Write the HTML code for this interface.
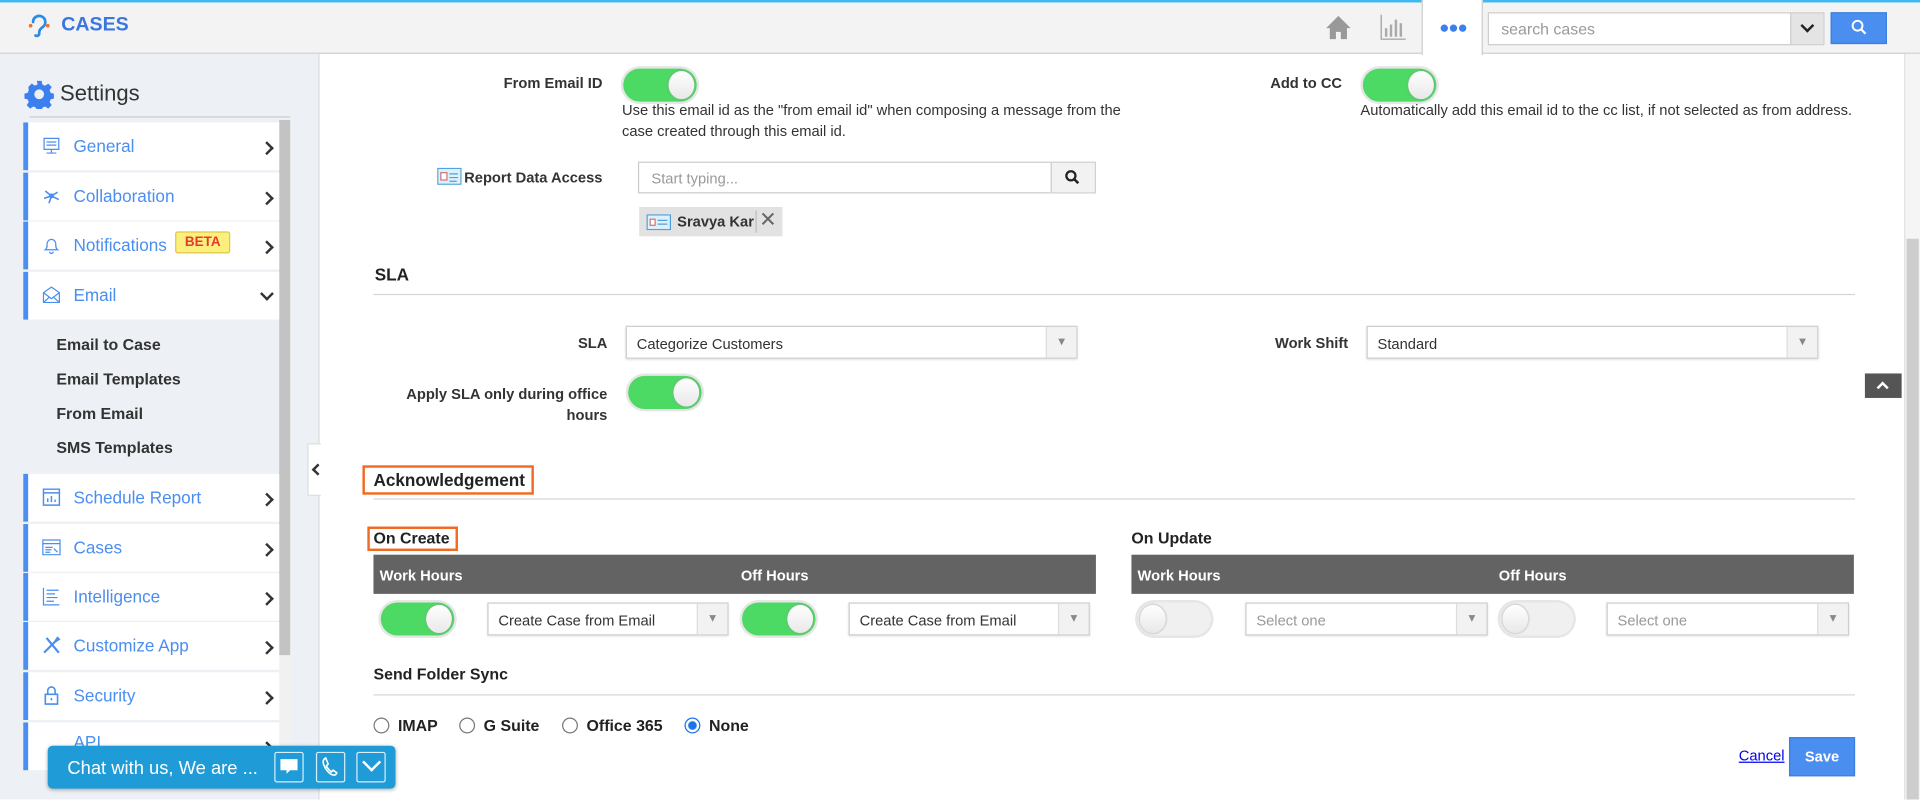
<!DOCTYPE html>
<html><head><meta charset="utf-8">
<style>
*{box-sizing:border-box;margin:0;padding:0}
html,body{width:1920px;height:799px;overflow:hidden;background:#fff;font-family:"Liberation Sans",Arial,sans-serif}
#s{position:absolute;left:0;top:0;width:1568px;height:653px;transform:scale(1.22449);transform-origin:0 0;overflow:hidden}
.a{position:absolute}
.hdr{left:0;top:0;width:1568px;height:44px;background:#f3f3f3;border-top:2px solid #3cb9f0;border-bottom:1px solid #cfcfcf}
.side{left:0;top:44px;width:261px;height:609px;background:#edf0f5;border-right:1px solid #dcdcdc}
.mi{position:absolute;left:19px;width:209px;height:39px;background:#fff;border-left:4px solid #4a8ef0;color:#4a8ef0;font-size:14px}
.mi .t{position:absolute;left:37px;top:11px}
.mi .i{position:absolute;left:11px;top:11px;width:16px;height:16px}
.mi .c{position:absolute;right:6px;top:17px;width:8px;height:8px;border-right:2.5px solid #333;border-top:2.5px solid #333;transform:rotate(45deg)}
.sub{position:absolute;left:46px;font-size:13px;font-weight:bold;color:#333}
.lbl{position:absolute;font-size:12px;font-weight:bold;color:#333;text-align:right;white-space:nowrap}
.tg{position:absolute;width:60px;height:27px;border-radius:14px;background:#4cd964;box-shadow:0 0 0 2px #e6e6e6}
.tg::after{content:"";position:absolute;right:2px;top:2px;width:21px;height:23px;border-radius:50%;background:linear-gradient(#fff,#e8e8e8);box-shadow:0 0 2px #999}
.tg.off{background:#f0f0f0}
.tg.off::after{left:2px;right:auto}
.desc{position:absolute;font-size:12px;color:#333;line-height:17px}
.sel{position:absolute;height:27px;border:1px solid #ccc;background:#fff;font-size:12px;color:#333;padding:7px 8px;box-shadow:0 1px 2px #ddd}
.sel::after{content:"▾";position:absolute;right:0;top:0;width:24px;height:25px;border-left:1px solid #ddd;background:#f2f2f2;color:#888;font-size:11px;text-align:center;line-height:25px}
.sel.ph{color:#999}
.h{position:absolute;font-size:14px;font-weight:bold;color:#222}
.line{position:absolute;height:1px;background:#d6d6d6}
.th{position:absolute;height:32px;background:#636363;color:#fff;font-size:12px;font-weight:bold}
.th span{position:absolute;top:10px}
.rad{position:absolute;top:586px;width:13px;height:13px;border:1px solid #777;border-radius:50%;background:#fff}
.rt{position:absolute;top:585px;font-size:13px;font-weight:bold;color:#222}
</style></head><body><div id="s">
<div class="a hdr">
 <svg class="a" style="left:22px;top:8px" width="20" height="24" viewBox="0 0 20 24"><path d="M5 8a5 5 0 1 1 8 4c-2 1.5-3 2.5-3 5v1a2 2 0 0 1-3 1" fill="none" stroke="#2a8be6" stroke-width="2.2" stroke-linecap="round"/><circle cx="3" cy="11" r="1.5" fill="#f0712a"/><circle cx="17" cy="11" r="1.5" fill="#f0712a"/></svg>
 <div class="a" style="left:50px;top:10px;font-size:16px;font-weight:bold;color:#3b76e0">CASES</div>
 <svg class="a" style="left:1082px;top:9px" width="22" height="22" viewBox="0 0 22 22"><path d="M11 2 1 12h3v9h5v-6h4v6h5v-9h3z" fill="#999"/></svg>
 <svg class="a" style="left:1127px;top:9px" width="22" height="22" viewBox="0 0 22 22"><path d="M1 1v20h20" fill="none" stroke="#aaa" stroke-width="1.2"/><path d="M5 12v7M9 9v10M13 5v14M17 8v11" stroke="#aaa" stroke-width="2"/></svg>
 <div class="a" style="left:1161px;top:-2px;width:50px;height:45px;background:#fff;border-left:1px solid #ccc;border-right:1px solid #ccc"></div>
 <svg class="a" style="left:1176px;top:17px" width="22" height="8" viewBox="0 0 22 8"><circle cx="3.5" cy="4" r="3" fill="#3b80ee"/><circle cx="11" cy="4" r="3" fill="#3b80ee"/><circle cx="18.5" cy="4" r="3" fill="#3b80ee"/></svg>
 <div class="a" style="left:1215px;top:8px;width:275px;height:27px;background:#fff;border:1px solid #ccc;font-size:13px;color:#999;padding:5px 10px">search cases</div>
 <div class="a" style="left:1462px;top:9px;width:27px;height:25px;background:#e4e4e4;border-left:1px solid #ccc"></div>
 <div class="a" style="left:1472px;top:15px;width:8px;height:8px;border-right:2.5px solid #222;border-bottom:2.5px solid #222;transform:rotate(45deg)"></div>
 <div class="a" style="left:1495px;top:8px;width:46px;height:26px;background:#4a8ef0;border:1px solid #3a7ee0"></div>
 <svg class="a" style="left:1511px;top:13px" width="14" height="14" viewBox="0 0 14 14"><circle cx="6" cy="6" r="4" fill="none" stroke="#fff" stroke-width="1.6"/><path d="M9 9l3.5 3.5" stroke="#fff" stroke-width="1.8"/></svg>
</div>

<div class="a side"></div>
<svg class="a" style="left:20px;top:65px" width="24" height="24" viewBox="0 0 24 24"><path fill="#3b80ee" d="M10 1h4l.6 3 2.2 1 2.6-1.7 2.8 2.8-1.7 2.6 1 2.2 3 .6v4l-3 .6-1 2.2 1.7 2.6-2.8 2.8-2.6-1.7-2.2 1-.6 3h-4l-.6-3-2.2-1-2.6 1.7-2.8-2.8 1.7-2.6-1-2.2-3-.6v-4l3-.6 1-2.2L3.1 6l2.8-2.8 2.6 1.7 2.2-1z"/><circle cx="12" cy="12" r="4" fill="#edf0f5"/></svg>
<div class="a" style="left:49px;top:66px;font-size:18px;color:#333">Settings</div>
<div class="a" style="left:24px;top:95px;width:213px;height:1px;background:#ccc"></div>
<div class="a" style="left:228px;top:98px;width:10px;height:545px;background:#f1f1f1"></div>
<div class="a" style="left:228px;top:98px;width:9px;height:437px;background:#c3c3c3"></div>

<div class="mi" style="top:100px"><svg class="i" viewBox="0 0 16 16"><path d="M2 2h12v9H2zM8 11v3M4 14h8M4 5h8M4 7.5h8" fill="none" stroke="#4a8ef0"/></svg><span class="t">General</span><span class="c"></span></div>
<div class="mi" style="top:141px"><svg class="i" viewBox="0 0 16 16"><path d="M8 8 3 4M8 8l5-3M8 8l-2 6M8 8l6 3M8 8 2 10" stroke="#4a8ef0" stroke-width="1.3"/><circle cx="8" cy="8" r="2" fill="#4a8ef0"/></svg><span class="t">Collaboration</span><span class="c"></span></div>
<div class="mi" style="top:181px"><svg class="i" viewBox="0 0 16 16"><path d="M3 12c1.5-1 1.5-3 1.5-5a3.5 3.5 0 0 1 7 0c0 2 0 4 1.5 5zM6.5 13.5a1.5 1.5 0 0 0 3 0" fill="none" stroke="#4a8ef0"/></svg><span class="t">Notifications</span><span class="a" style="left:120px;top:8px;background:#fbef7d;border:1px solid #e0c940;color:#e8382f;font-size:11px;font-weight:bold;padding:2px 7px;border-radius:2px">BETA</span><span class="c"></span></div>
<div class="mi" style="top:222px"><svg class="i" viewBox="0 0 16 16"><path d="M1.5 6 8 1.5 14.5 6v8h-13zM1.5 6 8 11l6.5-5M1.5 14l5-4.5M14.5 14l-5-4.5" fill="none" stroke="#4a8ef0"/></svg><span class="t">Email</span><span class="a" style="right:6px;top:14px;width:8px;height:8px;border-right:2.5px solid #333;border-bottom:2.5px solid #333;transform:rotate(45deg)"></span></div>
<div class="sub" style="top:274px">Email to Case</div>
<div class="sub" style="top:302px">Email Templates</div>
<div class="sub" style="top:330px">From Email</div>
<div class="sub" style="top:358px">SMS Templates</div>
<div class="mi" style="top:387px"><svg class="i" viewBox="0 0 16 16"><path d="M1.5 1.5h13v13h-13zM1.5 4.5h13M5 12V9M8 12V7M11 12v-2" fill="none" stroke="#4a8ef0" stroke-width="1.2"/></svg><span class="t">Schedule Report</span><span class="c"></span></div>
<div class="mi" style="top:428px"><svg class="i" viewBox="0 0 16 16"><path d="M1 2h14v12H1zM1 5h14M3 8h6M3 10h5M3 12h4M10 9l3 3" fill="none" stroke="#4a8ef0"/></svg><span class="t">Cases</span><span class="c"></span></div>
<div class="mi" style="top:468px"><svg class="i" viewBox="0 0 16 16"><path d="M1.5 1v14h13M4 3h10M4 6h7M4 9h9M4 12h6" fill="none" stroke="#4a8ef0"/></svg><span class="t">Intelligence</span><span class="c"></span></div>
<div class="mi" style="top:508px"><svg class="i" viewBox="0 0 16 16"><path d="M2 14 11 5M4 2l10 12M11 5l2-3 1 1-3 2" fill="none" stroke="#4a8ef0" stroke-width="1.8"/></svg><span class="t">Customize App</span><span class="c"></span></div>
<div class="mi" style="top:549px"><svg class="i" viewBox="0 0 16 16"><path d="M3 7h10v8H3zM5 7V4a3 3 0 0 1 6 0v3M8 10v2" fill="none" stroke="#4a8ef0" stroke-width="1.3"/></svg><span class="t">Security</span><span class="c"></span></div>
<div class="mi" style="top:590px"><span class="t" style="top:8px">API</span><span class="c"></span></div>

<div class="a" style="left:39px;top:609px;width:284px;height:35px;background:#1f9bd8;border-radius:4px;box-shadow:0 1px 3px rgba(0,0,0,.3)"></div>
<div class="a" style="left:55px;top:619px;color:#fff;font-size:15px">Chat with us, We are ...</div>
<div class="a" style="left:224px;top:614px;width:24px;height:25px;border:1px solid #d8eefa;border-radius:2px"></div>
<svg class="a" style="left:228px;top:618px" width="16" height="16" viewBox="0 0 16 16"><path d="M1 2h14v9H9l-3 3v-3H1z" fill="#fff"/></svg>
<div class="a" style="left:258px;top:614px;width:24px;height:25px;border:1px solid #d8eefa;border-radius:2px"></div>
<svg class="a" style="left:262px;top:618px" width="16" height="16" viewBox="0 0 16 16"><path d="M4 1c-2 1-3 3-1 7s5 7 8 7c1 0 2-1 2-2l-3-2-1.5 1.5C7 11 5 9 4.5 7.5L6 6 4 1z" fill="none" stroke="#fff" stroke-width="1.3"/></svg>
<div class="a" style="left:291px;top:614px;width:24px;height:25px;border:1px solid #d8eefa;border-radius:2px"></div>
<div class="a" style="left:298px;top:617px;width:11px;height:11px;border-right:2px solid #fff;border-bottom:2px solid #fff;transform:rotate(45deg)"></div>

<div class="a" style="left:251px;top:362px;width:11px;height:43px;background:#fff;border:1px solid #ddd;border-right:none"></div>
<div class="a" style="left:256px;top:380px;width:7px;height:7px;border-left:2.5px solid #333;border-bottom:2.5px solid #333;transform:rotate(45deg)"></div>

<div class="a" style="left:1555px;top:44px;width:13px;height:609px;background:#f5f5f5;border-left:1px solid #e2e2e2"></div>
<div class="a" style="left:1557px;top:195px;width:10px;height:458px;background:#cdcdcd"></div>
<div class="a" style="left:1523px;top:305px;width:30px;height:20px;background:#555"></div>
<div class="a" style="left:1534px;top:313px;width:7px;height:7px;border-left:2px solid #fff;border-top:2px solid #fff;transform:rotate(45deg)"></div>

<div class="lbl" style="left:380px;width:112px;top:61px">From Email ID</div>
<div class="tg" style="left:509px;top:56px"></div>
<div class="desc" style="left:508px;top:82px">Use this email id as the "from email id" when composing a message from the<br>case created through this email id.</div>
<div class="lbl" style="left:980px;width:116px;top:61px">Add to CC</div>
<div class="tg" style="left:1113px;top:56px"></div>
<div class="desc" style="left:1111px;top:82px">Automatically add this email id to the cc list, if not selected as from address.</div>

<svg class="a" style="left:357px;top:137px" width="20" height="14" viewBox="0 0 20 14"><rect x=".5" y=".5" width="19" height="13" fill="#dff0fb" stroke="#4aa3e0"/><rect x="3" y="4" width="5" height="6" fill="#fff" stroke="#c77"/><path d="M10 5h7M10 8h7M10 11h6" stroke="#4aa3e0"/></svg>
<div class="lbl" style="left:362px;width:130px;top:138px">Report Data Access</div>
<div class="a" style="left:521px;top:132px;width:374px;height:26px;border:1px solid #ccc;background:#fff;font-size:12px;color:#999;padding:6px 10px">Start typing...</div>
<div class="a" style="left:858px;top:133px;width:36px;height:24px;background:#f2f2f2;border-left:1px solid #ccc"></div>
<svg class="a" style="left:869px;top:138px" width="13" height="13" viewBox="0 0 14 14"><circle cx="6" cy="6" r="4" fill="none" stroke="#222" stroke-width="2"/><path d="M9 9l3.5 3.5" stroke="#222" stroke-width="2.2"/></svg>
<div class="a" style="left:522px;top:169px;width:117px;height:24px;background:#e2e2e2"></div>
<svg class="a" style="left:528px;top:175px" width="20" height="13" viewBox="0 0 20 13"><rect x=".5" y=".5" width="19" height="12" fill="#dff0fb" stroke="#4aa3e0"/><rect x="3" y="4" width="4" height="5" fill="#fff" stroke="#c77"/><path d="M9 5h8M9 8h8" stroke="#4aa3e0"/></svg>
<div class="a" style="left:553px;top:174px;font-size:12px;font-weight:bold;color:#333">Sravya Kar</div>
<div class="a" style="left:617px;top:172px;width:1px;height:18px;background:#bbb"></div>
<div class="a" style="left:620px;top:170px;font-size:17px;color:#666">✕</div>

<div class="h" style="left:306px;top:216px">SLA</div>
<div class="line" style="left:305px;top:240px;width:1210px"></div>
<div class="lbl" style="left:400px;width:96px;top:273px">SLA</div>
<div class="sel" style="left:511px;top:266px;width:369px">Categorize Customers</div>
<div class="lbl" style="left:1000px;width:101px;top:273px">Work Shift</div>
<div class="sel" style="left:1116px;top:266px;width:369px">Standard</div>
<div class="lbl" style="left:300px;width:196px;top:314px;line-height:17px;white-space:normal">Apply SLA only during office<br>hours</div>
<div class="tg" style="left:513px;top:307px"></div>

<div class="a" style="left:296px;top:380px;width:140px;height:24px;border:2px solid #f26a21"></div>
<div class="h" style="left:305px;top:384px">Acknowledgement</div>
<div class="line" style="left:305px;top:407px;width:1210px"></div>
<div class="a" style="left:300px;top:430px;width:74px;height:20px;border:2px solid #f26a21"></div>
<div class="h" style="left:305px;top:432px;font-size:13px">On Create</div>
<div class="h" style="left:924px;top:432px;font-size:13px">On Update</div>
<div class="th" style="left:305px;top:453px;width:590px"><span style="left:5px">Work Hours</span><span style="left:300px">Off Hours</span></div>
<div class="th" style="left:924px;top:453px;width:590px"><span style="left:5px">Work Hours</span><span style="left:300px">Off Hours</span></div>
<div class="tg" style="left:311px;top:492px"></div>
<div class="sel" style="left:398px;top:492px;width:197px">Create Case from Email</div>
<div class="tg" style="left:606px;top:492px"></div>
<div class="sel" style="left:693px;top:492px;width:197px">Create Case from Email</div>
<div class="tg off" style="left:929px;top:492px"></div>
<div class="sel ph" style="left:1017px;top:492px;width:198px">Select one</div>
<div class="tg off" style="left:1225px;top:492px"></div>
<div class="sel ph" style="left:1312px;top:492px;width:198px">Select one</div>

<div class="h" style="left:305px;top:543px;font-size:13px">Send Folder Sync</div>
<div class="line" style="left:305px;top:567px;width:1210px"></div>
<div class="rad" style="left:305px"></div><div class="rt" style="left:325px">IMAP</div>
<div class="rad" style="left:375px"></div><div class="rt" style="left:395px">G Suite</div>
<div class="rad" style="left:459px"></div><div class="rt" style="left:479px">Office 365</div>
<div class="rad" style="left:559px;border-color:#1a73e8;background:radial-gradient(#1a73e8 3px,#fff 4px)"></div><div class="rt" style="left:579px">None</div>

<div class="a" style="left:1420px;top:610px;font-size:12px;color:#00e;text-decoration:underline">Cancel</div>
<div class="a" style="left:1461px;top:602px;width:54px;height:32px;background:#4a8ef0;border:1px solid #3a7ee0;color:#fff;font-size:12px;font-weight:bold;text-align:center;line-height:30px">Save</div>
</div></body></html>
